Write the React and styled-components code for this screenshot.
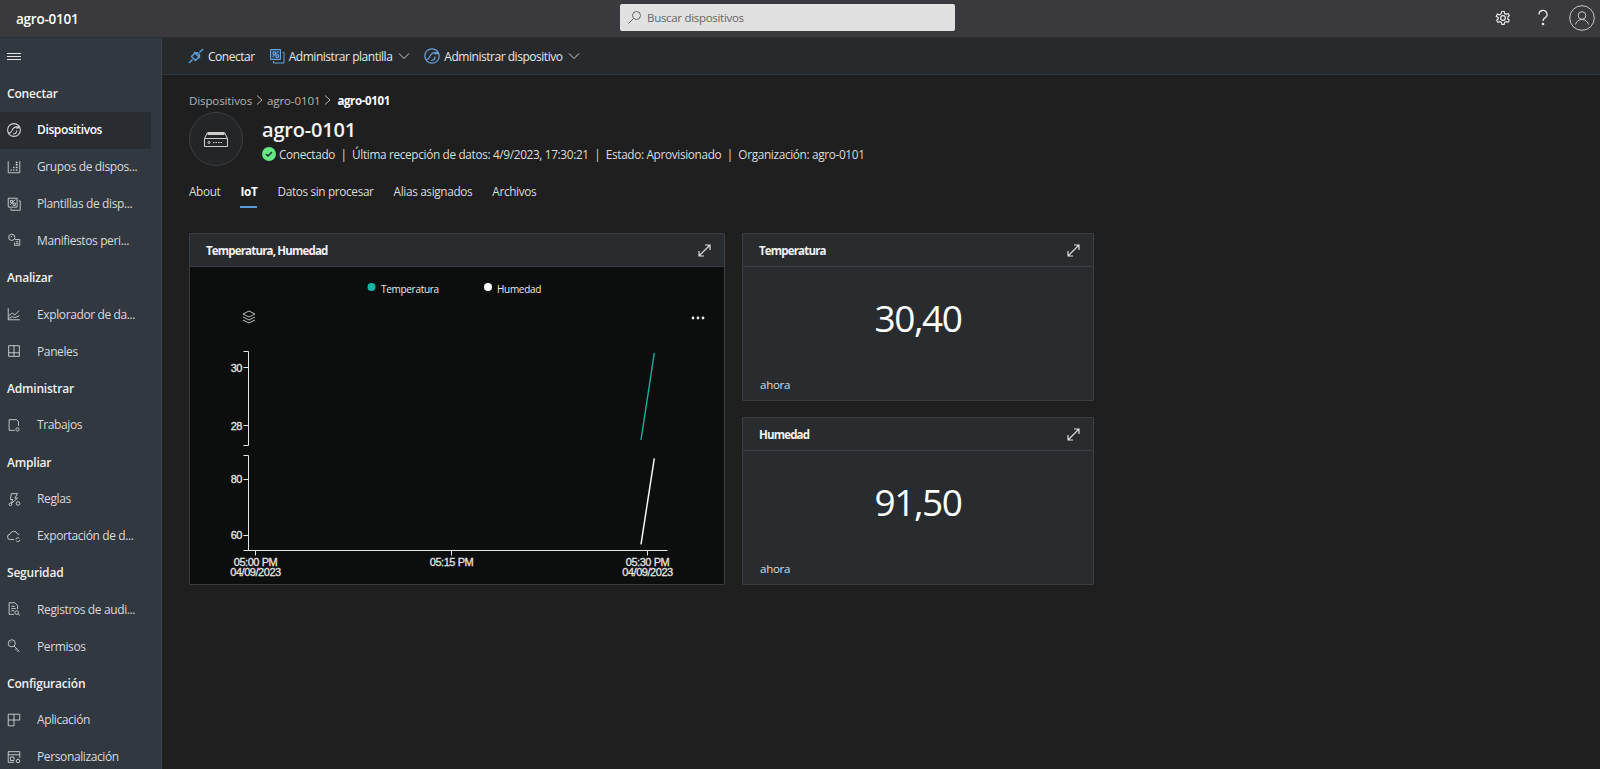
import React from "react";
import styled, { createGlobalStyle } from "styled-components";

const Global = createGlobalStyle`
  html, body { margin: 0; padding: 0; height: 100%; overflow: hidden; background: #1f1f1f; }
  #root { height: 100vh; }
  * { box-sizing: border-box; }
  body { font-family: "Open Sans", "Noto Sans", "Liberation Sans", sans-serif; color: #e8e8e8; }
`;

const Page = styled.div`
  height: 769px; display: flex; flex-direction: column; overflow: hidden;
`;
const TopBar = styled.header`
  height: 38px; flex: none; display: grid; grid-template-columns: 620px 335px 1fr; align-items: center;
  background: #3a3a3e; border-bottom: 1px solid #2e2e31;
`;
const Brand = styled.div`
  padding-left: 16px; font-size: 13.5px; font-weight: 600; color: #fff; letter-spacing: -0.25px;
`;
const Search = styled.div`
  height: 27px; margin-top: -3px; display: flex; align-items: center; gap: 5px; padding-left: 7px;
  background: #e1e1e1; border-radius: 2px; color: #666; font-size: 11.5px; letter-spacing: -0.3px;
`;
const TopIcons = styled.div`
  display: flex; justify-content: flex-end; align-items: center; padding-right: 5px; margin-top: -1px;
`;
const GearWrap = styled.span` display: flex; margin-right: 25px; `;
const HelpWrap = styled.span` display: flex; margin-right: 19px; `;
const Body = styled.div` flex: 1; min-height: 0; display: flex; `;
const Side = styled.nav`
  width: 162px; flex: none; background: #323840; border-right: 1px solid #3d424a; overflow: hidden;
  display: grid; grid-auto-rows: 36.9px; align-content: start;
`;
const Burger = styled.div`
  display: flex; align-items: center; padding-left: 7px; padding-top: 1px;
`;
const Section = styled.div`
  display: flex; align-items: center; padding-left: 7px; font-size: 12px; font-weight: 600; color: #f0f0f0; letter-spacing: -0.2px;
`;
const Row = styled.div`
  width: 151px; display: flex; align-items: center; padding: 0 0 1px 6px; gap: 15px; font-size: 12px; white-space: nowrap;
  color: ${p => (p.$active ? "#fff" : "#d8dadc")}; font-weight: ${p => (p.$active ? 600 : 400)};
  background: ${p => (p.$active ? "#292c30" : "transparent")}; letter-spacing: -0.38px;
`;
const Main = styled.main` flex: 1; min-width: 0; display: flex; flex-direction: column; `;
const CmdBar = styled.div`
  height: 37px; flex: none; background: #272a2d; border-bottom: 1px solid #33363a;
  display: flex; align-items: center; padding-left: 25px; gap: 13px; font-size: 12px; color: #e6e6e6; letter-spacing: -0.47px;
`;
const Cmd = styled.div` display: flex; align-items: center; gap: 3px; `;
const CmdChevron = styled.span` display: flex; margin-left: 3px; `;
const Content = styled.div` padding: 17px 0 0 27px; `;
const Crumbs = styled.div`
  display: flex; align-items: center; gap: 4px; height: 16px; font-size: 11.5px; color: #b4b4b4; letter-spacing: -0.1px;
  b { color: #fff; font-weight: 700; letter-spacing: -0.35px; margin-left: 2px; }
`;
const Head = styled.div` display: flex; gap: 19px; margin-top: 4px; `;
const Avatar = styled.div`
  width: 54px; height: 54px; border-radius: 50%; border: 1px solid #3b3f43; background: #232527;
  display: flex; align-items: center; justify-content: center;
`;
const HeadText = styled.div` padding-top: 4px; `;
const Title = styled.h1` margin: 0; font-size: 20px; line-height: 28px; font-weight: 600; color: #f4f4f4; letter-spacing: -0.2px; `;
const Status = styled.div`
  display: flex; align-items: center; margin-top: 2px; font-size: 11.8px; color: #dcdcdc; white-space: nowrap; letter-spacing: -0.34px;
`;
const Dot = styled.span`
  width: 14px; height: 14px; border-radius: 50%; background: #63e884; margin-right: 3px;
  display: inline-flex; align-items: center; justify-content: center;
`;
const Tabs = styled.div`
  display: flex; gap: 20px; margin-top: 9px; height: 33px; font-size: 11.8px; color: #dcdcdc; letter-spacing: -0.35px;
`;
const Tab = styled.div`
  height: 33px; padding-top: 8px;
  font-weight: ${p => (p.$active ? 700 : 400)}; color: ${p => (p.$active ? "#fff" : "#dcdcdc")};
  border-bottom: 2px solid ${p => (p.$active ? "#5a9bd8" : "transparent")};
`;
const Grid = styled.div`
  display: grid; grid-template-columns: 536px 352px; column-gap: 17px; margin-top: 25px; align-items: start;
`;
const Card = styled.section`
  border: 1px solid #3a3e42; background: #292c2f; border-radius: 1px;
  height: ${p => p.$h}px; display: flex; flex-direction: column; overflow: hidden;
`;
const CardHead = styled.div`
  height: 33px; flex: none; display: flex; align-items: center; justify-content: space-between;
  padding: 0 12px 0 16px; border-bottom: 1px solid #3a3e42; font-size: 11.5px; font-weight: 700; color: #f2f2f2; letter-spacing: -0.82px;
`;
const ChartBody = styled.div` flex: 1; background: #0c0e0e; svg { display: block; } `;
const Stack = styled.div` display: flex; flex-direction: column; gap: 16px; `;
const TileBody = styled.div`
  flex: 1; display: flex; flex-direction: column; padding: 0 17px 8px;
`;
const Value = styled.div`
  flex: 1; display: flex; justify-content: center; padding-top: 26px;
  font-size: 37px; line-height: 50px; color: #fff; letter-spacing: -1.4px;
`;
const Since = styled.div` font-size: 11.5px; color: #dcdcdc; letter-spacing: -0.25px; `;

const Ic = ({ size = 18, c = "#d3d6d9", w = 1, children }) => (
  <svg width={size} height={size} viewBox="0 0 18 18" fill="none" stroke={c} strokeWidth={w} style={{ flex: "none" }}>{children}</svg>
);
const Device = ({ c, size }) => (
  <Ic c={c} size={size} w={1.2}>
    <circle cx="9" cy="9" r="7.200" />
    <path d="M3 12.500c3 .5 3.500-3 5-5s4-2.500 6.500-1M14 3.500l.5 3-3 .5M8 13.500c2.500 0 4-1.500 4-4" />
  </Ic>
);
const Tpl = ({ c, size, fill = "none" }) => (
  <Ic c={c} size={size}>
    <path d="M2.500 2.500h10v10h-10z" fill={fill} />
    <path d="M14.500 5.500h1.500v10.500H5.500v-2" />
    <path d="M4.500 10l6-6M5 5h2.500v2.500H5zM8 8h2.500v2.500H8z" />
  </Ic>
);
const Plug = () => <Ic c="#5a9bd8" w={1.5}><path d="M2 16l3.500-3.500M12.500 5.500L16 2M4.500 9.500l4 4 3-3a2.800 2.800 0 0 0-4-4zM7 5l6 6" /></Ic>;
const Chevron = () => <svg width="12" height="12" viewBox="0 0 12 12" fill="none" stroke="#d0d0d0"><path d="M1 3.500l5 5 5-5" /></svg>;
const Expand = () => <svg width="15" height="15" viewBox="0 0 15 15" fill="none" stroke="#dcdcdc" strokeWidth="1.200"><path d="M2 13L13 2M8 2h5v5M2 8v5h5" /></svg>;

const navIcons = {
  device: <Device size={16} />,
  groups: <Ic size={16}><path d="M2.500 2.500v13h13V2.500" /><path d="M5 12.500h1.500M8 12.500h1.500M11 12.500h2M8 9.500h1.500M11 9.500h2M11 6.500h2M11 4h2" strokeWidth="1.600" /></Ic>,
  tpl: <Tpl size={16} />,
  manifest: <Ic size={16}><circle cx="6.500" cy="6" r="3.500" /><path d="M10 8.500h5.500v6.500H9.500v-3M11 11h3M11 13h3M5 6l2-1.500" /></Ic>,
  explorer: <Ic size={16}><path d="M2.500 2.500v13h13" /><path d="M3 11l4-3 3 2 5-5M3 14l4-2 3 1 5-2" /></Ic>,
  boards: <Ic size={16}><path d="M3 3h12v12H3zM3 11h12M9 3v12" /></Ic>,
  jobs: <Ic size={16}><path d="M10 15H3.500V3H12l2 2v5" /><circle cx="13" cy="14" r="1.800" /></Ic>,
  rules: <Ic size={16}><path d="M6 3h7l-3 5h3L6 14l1.500-4.500H5z" /><circle cx="5" cy="15" r="1.500" /><circle cx="13.500" cy="14" r="2" /></Ic>,
  exportd: <Ic size={16}><path d="M9 13H5a3 3 0 0 1-.5-6 4.500 4.500 0 0 1 8.500-.5 3 3 0 0 1 2 1.500" /><path d="M11 13a2.200 2.200 0 0 1 4-1M15.500 13.500a2.200 2.200 0 0 1-4 1" /></Ic>,
  audit: <Ic size={16}><path d="M13 9V5L10 2H3.500v13H9" /><path d="M6 6h4M6 8.500h5M6 11h3" /><circle cx="12" cy="13" r="2" /><path d="M13.500 14.500l2 1.500" /></Ic>,
  keys: <Ic size={16}><circle cx="6.500" cy="6" r="4" /><path d="M9 9l6 6.500M12 12l-1.500 1.500M14 14l-1.500 1.500M5 5h1" /></Ic>,
  app: <Ic size={16}><path d="M2.500 2.500h13v6.500H9v6.500H2.500zM2.500 9H9V2.500" /></Ic>,
  custom: <Ic size={16}><path d="M2.500 3h13v7M2.500 3v12H9M2.500 6.500h13" /><path d="M5 9h4v4H5z" /><circle cx="13.500" cy="13.500" r="2" /></Ic>,
};

const nav = [
  ["s", "Conectar"],
  ["r", "Dispositivos", "device", true],
  ["r", "Grupos de dispos...", "groups"],
  ["r", "Plantillas de disp...", "tpl"],
  ["r", "Manifiestos peri...", "manifest"],
  ["s", "Analizar"],
  ["r", "Explorador de da...", "explorer"],
  ["r", "Paneles", "boards"],
  ["s", "Administrar"],
  ["r", "Trabajos", "jobs"],
  ["s", "Ampliar"],
  ["r", "Reglas", "rules"],
  ["r", "Exportación de d...", "exportd"],
  ["s", "Seguridad"],
  ["r", "Registros de audi...", "audit"],
  ["r", "Permisos", "keys"],
  ["s", "Configuración"],
  ["r", "Aplicación", "app"],
  ["r", "Personalización", "custom"],
];

const ChartText = styled.text`
  font-family: "Liberation Sans", sans-serif; font-size: 11px; fill: #e4e4e4; letter-spacing: -0.45px;
  stroke: #e4e4e4; stroke-width: 0.3px;
`;
const LegendText = styled.text`
  font-family: "Open Sans", sans-serif; font-size: 10px; fill: #e8e8e8; letter-spacing: -0.3px;
`;

/* chart origin: page (190, 267) */
const Chart = () => {
  const ox = 190, oy = 267;
  const X = v => v - ox, Y = v => v - oy;
  return (
    <svg width="534" height="317" viewBox="0 0 534 317">
      <circle cx={X(371.5)} cy={Y(287)} r="4" fill="#14b8a6" />
      <LegendText x={X(381)} y={Y(292.5)}>Temperatura</LegendText>
      <circle cx={X(488)} cy={Y(287)} r="4" fill="#fff" />
      <LegendText x={X(497)} y={Y(292.5)}>Humedad</LegendText>
      <g fill="none" stroke="#bdbdbd" strokeWidth="1" transform={`translate(${X(242)} ${Y(310)})`}>
        <path d="M7 1L1 4l6 3 6-3zM1 7l6 3 6-3M1 10l6 3 6-3" />
      </g>
      <g fill="#e6e6e6">
        <circle cx={X(693)} cy={Y(318)} r="1.400" /><circle cx={X(698)} cy={Y(318)} r="1.400" /><circle cx={X(703)} cy={Y(318)} r="1.400" />
      </g>
      <g fill="none" stroke="#e6e6e6" strokeWidth="1">
        <path d={`M${X(243.5)} ${Y(351.5)}H${X(248.5)}V${Y(445.5)}H${X(243.5)}`} />
        <path d={`M${X(243.5)} ${Y(367.5)}H${X(248.5)}M${X(243.5)} ${Y(425.5)}H${X(248.5)}`} />
        <path d={`M${X(243.5)} ${Y(455.5)}H${X(248.5)}V${Y(550.5)}`} />
        <path d={`M${X(243.5)} ${Y(479.5)}H${X(248.5)}M${X(243.5)} ${Y(535.5)}H${X(248.5)}`} />
        <path d={`M${X(243.5)} ${Y(550.5)}H${X(667.5)}`} />
        <path d={`M${X(255.5)} ${Y(550.5)}V${Y(555.5)}M${X(451.5)} ${Y(550.5)}V${Y(555.5)}M${X(647.5)} ${Y(550.5)}V${Y(555.5)}`} />
      </g>
      <line x1={X(641)} y1={Y(440)} x2={X(654.3)} y2={Y(353)} stroke="#14a898" strokeWidth="1.5" />
      <line x1={X(641)} y1={Y(544.3)} x2={X(654.3)} y2={Y(458.3)} stroke="#f4f4f4" strokeWidth="1.5" />
      {[["30", 371.5], ["28", 429], ["80", 482.5], ["60", 538.5]].map(([t, y]) => (
        <ChartText key={t} x={X(242)} y={Y(y + 0.5)} textAnchor="end">{t}</ChartText>
      ))}
      {[[255.5, "05:00 PM", "04/09/2023"], [451.5, "05:15 PM"], [647.5, "05:30 PM", "04/09/2023"]].map(([x, a, b]) => (
        <g key={x}>
          <ChartText x={X(x)} y={Y(566)} textAnchor="middle">{a}</ChartText>
          {b && <ChartText x={X(x)} y={Y(575.5)} textAnchor="middle">{b}</ChartText>}
        </g>
      ))}
    </svg>
  );
};

const Tile = ({ h, title, value }) => (
  <Card $h={h}>
    <CardHead>{title}<Expand /></CardHead>
    <TileBody>
      <Value>{value}</Value>
      <Since>ahora</Since>
    </TileBody>
  </Card>
);

const Sep = () => <svg width="7" height="10" viewBox="0 0 7 10" fill="none" stroke="#b4b4b4"><path d="M1 .5l5 4.500-5 4.500" /></svg>;

export default function App() {
  return (
    <Page>
      <Global />
      <TopBar>
        <Brand>agro-0101</Brand>
        <Search>
          <svg width="15" height="15" viewBox="0 0 15 15" fill="none" stroke="#666" strokeWidth="1"><circle cx="9.500" cy="5.500" r="4" /><path d="M6.500 8.500L1.500 13.500" /></svg>
          Buscar dispositivos
        </Search>
        <TopIcons>
          <GearWrap><svg width="16" height="16" viewBox="0 0 16 16" fill="none" stroke="#e8e8e8" strokeWidth="1.200"><circle cx="8" cy="8" r="2.400" /><path d="M6.800 1.500h2.400l.4 2 1.600.8 1.900-.8 1.200 2.100-1.500 1.400v1.900l1.500 1.300-1.200 2.100-1.900-.7-1.600.9-.4 1.900H6.800l-.4-1.900-1.600-.9-1.900.7-1.200-2.100 1.500-1.300V7.600L1.200 6.200l1.200-2.100 1.900.8 1.600-.8z" /></svg></GearWrap>
          <HelpWrap><svg width="14" height="18" viewBox="0 0 14 18" fill="none" stroke="#e8e8e8" strokeWidth="1.300"><path d="M3 5.500a4 4 0 1 1 6 3.400c-1.300.8-2 1.500-2 3" /><circle cx="7" cy="15" r=".7" fill="#e8e8e8" /></svg></HelpWrap>
          <svg width="26" height="26" viewBox="0 0 26 26" fill="none" stroke="#c8c8c8" strokeWidth="1"><circle cx="13" cy="13" r="12.300" /><circle cx="13" cy="10.500" r="3.800" /><path d="M6.500 19.500c1-3.500 3.500-5 6.500-5s5.500 1.500 6.500 5" /></svg>
        </TopIcons>
      </TopBar>
      <Body>
        <Side>
          <Burger>
            <svg width="14" height="10" viewBox="0 0 14 10" stroke="#e4e4e4" strokeWidth="1"><path d="M0 1.500h14M0 4.500h14M0 7.500h14" /></svg>
          </Burger>
          {nav.map(([k, t, ic, act]) =>
            k === "s" ? <Section key={t}>{t}</Section> : (
              <Row key={t} $active={act}>{navIcons[ic]}<span>{t}</span></Row>
            )
          )}
        </Side>
        <Main>
          <CmdBar>
            <Cmd><Plug />Conectar</Cmd>
            <Cmd><Tpl c="#6ba3dc" fill="#2d4a68" />Administrar plantilla<CmdChevron><Chevron /></CmdChevron></Cmd>
            <Cmd><Device c="#6ba3dc" />Administrar dispositivo<CmdChevron><Chevron /></CmdChevron></Cmd>
          </CmdBar>
          <Content>
            <Crumbs>
              Dispositivos
              <Sep />
              agro-0101
              <Sep />
              <b>agro-0101</b>
            </Crumbs>
            <Head>
              <Avatar>
                <svg width="24" height="15" viewBox="0 0 24 15" fill="none" stroke="#cfcfcf"><path d="M.5 6.500h23v8H.5zM.5 6.500l3-6h17l3 6" /><path d="M3.500 2h17" strokeWidth="2" /><circle cx="5" cy="10.500" r="1" /><path d="M9 10.500h10" strokeDasharray="1.500 1" /></svg>
              </Avatar>
              <HeadText>
                <Title>agro-0101</Title>
                <Status>
                  <Dot><svg width="8" height="8" viewBox="0 0 8 8" fill="none" stroke="#123" strokeWidth="1.400"><path d="M1 4l2 2 4-4" /></svg></Dot>
                  Conectado&nbsp;&nbsp;|&nbsp;&nbsp;Última recepción de datos: 4/9/2023, 17:30:21&nbsp;&nbsp;|&nbsp;&nbsp;Estado: Aprovisionado&nbsp;&nbsp;|&nbsp;&nbsp;Organización: agro-0101
                </Status>
              </HeadText>
            </Head>
            <Tabs>
              <Tab>About</Tab>
              <Tab $active>IoT</Tab>
              <Tab>Datos sin procesar</Tab>
              <Tab>Alias asignados</Tab>
              <Tab>Archivos</Tab>
            </Tabs>
            <Grid>
              <Card $h={352}>
                <CardHead>Temperatura, Humedad<Expand /></CardHead>
                <ChartBody><Chart /></ChartBody>
              </Card>
              <Stack>
                <Tile h={168} title="Temperatura" value="30,40" />
                <Tile h={168} title="Humedad" value="91,50" />
              </Stack>
            </Grid>
          </Content>
        </Main>
      </Body>
    </Page>
  );
}
